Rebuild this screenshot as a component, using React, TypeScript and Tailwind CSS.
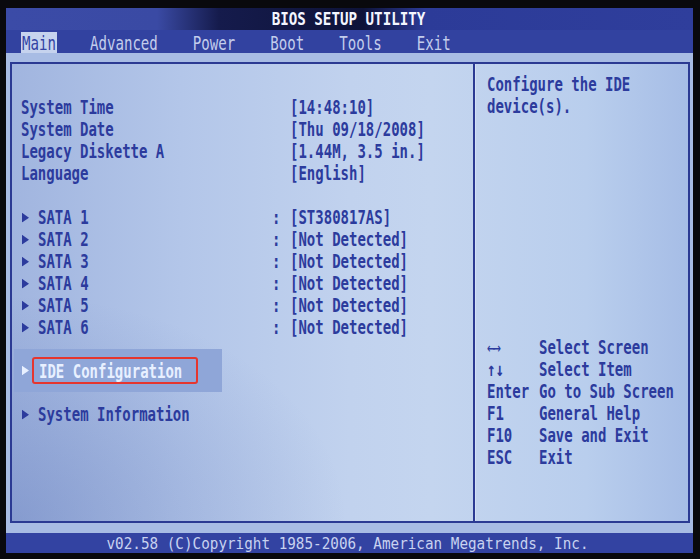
import React from 'react';

type InfoRow = { label: string; value: string; sub?: boolean };

const topRows: InfoRow[] = [
  { label: 'System Time', value: '[14:48:10]' },
  { label: 'System Date', value: '[Thu 09/18/2008]' },
  { label: 'Legacy Diskette A', value: '[1.44M, 3.5 in.]' },
  { label: 'Language', value: '[English]' },
];

const sataRows: InfoRow[] = [
  { label: 'SATA 1', value: '[ST380817AS]', sub: true },
  { label: 'SATA 2', value: '[Not Detected]', sub: true },
  { label: 'SATA 3', value: '[Not Detected]', sub: true },
  { label: 'SATA 4', value: '[Not Detected]', sub: true },
  { label: 'SATA 5', value: '[Not Detected]', sub: true },
  { label: 'SATA 6', value: '[Not Detected]', sub: true },
];

const keys = [
  { k: '←→', d: 'Select Screen' },
  { k: '↑↓', d: 'Select Item' },
  { k: 'Enter', d: 'Go to Sub Screen' },
  { k: 'F1', d: 'General Help' },
  { k: 'F10', d: 'Save and Exit' },
  { k: 'ESC', d: 'Exit' },
];

const menus = ['Advanced', 'Power', 'Boot', 'Tools', 'Exit'];

// small right-pointing marker used in front of sub menus
const Tri = () => (
  <svg width="7" height="7" viewBox="0 0 7 7">
    <polygon points="0,0 7,3.5 0,7" fill="currentColor" />
  </svg>
);

const Row: React.FC<{ row: InfoRow }> = ({ row }) => (
  <div className="h-[22px] flex items-center scale-y-[1.38] whitespace-pre">
    {row.sub ? (
      <>
        <span className="w-[17px] flex items-center pl-px">
          <Tri />
        </span>
        <span className="w-[234px]">{row.label}</span>
        <span className="w-[18px]">:</span>
      </>
    ) : (
      <span className="w-[269px]">{row.label}</span>
    )}
    <span>{row.value}</span>
  </div>
);

export default function App() {
  return (
    <div className="w-[700px] h-[559px] bg-[#09090d] pt-[8px] pl-[6px] pr-[7px] pb-[6px] overflow-hidden font-['DejaVu_Sans_Mono','Liberation_Mono',monospace] text-[14px] leading-[22px]">
      <div className="flex flex-col h-full">
        {/* title bar */}
        <div className="h-[22px] shrink-0 flex items-center justify-center bg-[linear-gradient(90deg,#3b4ba7_0%,#3a4aa4_22%,#151b4c_31%,#0e1339_52%,#2c3b98_61%,#2f3e9c_100%)]">
          <span className="inline-block scale-y-[1.27] font-bold text-[14.2px] text-[#f4f6ff] pr-[2px]">BIOS SETUP UTILITY</span>
        </div>

        {/* menu bar */}
        <div className="h-[23px] shrink-0 bg-[#3242a0] flex items-end pl-[15px] gap-[35px] text-[14.1px] text-[#c3cdec]">
          <div className="h-[21px] bg-[#c6d3ee] text-[#3343a3] px-px -mr-[2px] flex items-center">
            <span className="inline-block scale-y-[1.4]">Main</span>
          </div>
          {menus.map(m => (
            <div key={m} className="h-[21px] flex items-center">
              <span className="inline-block scale-y-[1.4]">{m}</span>
            </div>
          ))}
        </div>

        {/* body */}
        <div className="flex-1 bg-[#a8bce4] pt-[9px] pl-[4px] pr-[3px] pb-[10px]">
          <div className="h-full border-2 border-[#2b3a93] flex font-bold text-[#2c3b9d] bg-[radial-gradient(ellipse_at_0%_100%,rgba(70,95,170,0.3),transparent_35%),linear-gradient(90deg,#a1b5df_0%,#b3c6e9_25%,#c1d2ee_50%,#c4d5ef_62%,#b9ceed_85%,#a6bde6_100%)]">
            {/* left column */}
            <div className="w-[461px] shrink-0 pt-[32px] pl-[9px]">
              {topRows.map(r => (
                <Row key={r.label} row={r} />
              ))}
              <div className="h-[22px]" />
              {sataRows.map(r => (
                <Row key={r.label} row={r} />
              ))}

              <div className="mt-[11px] mb-[11px] -ml-[7px] w-[208px] h-[43px] bg-[#8fa6d8] flex items-center pl-[8px] text-[#e8f0ff]">
                <span className="w-[10px] flex items-center scale-y-[1.38]">
                  <Tri />
                </span>
                <div className="w-[166px] h-[27px] border-2 border-[#e6362f] rounded-[3px] flex items-center pl-[5px]">
                  <span className="inline-block scale-y-[1.38] whitespace-pre">IDE Configuration</span>
                </div>
              </div>

              <div className="h-[22px] flex items-center scale-y-[1.38] whitespace-pre">
                <span className="w-[17px] flex items-center pl-px">
                  <Tri />
                </span>
                <span>System Information</span>
              </div>
            </div>

            {/* right column */}
            <div className="flex-1 border-l-2 border-[#2b3a93] pt-[9px] pl-[12px] shadow-[inset_1px_0_0_#d4e0f5]">
              <div className="h-[22px] flex items-center scale-y-[1.38] whitespace-pre">Configure the IDE</div>
              <div className="h-[22px] flex items-center scale-y-[1.38] whitespace-pre">device(s).</div>

              <div className="mt-[219px]">
                {keys.map(k => (
                  <div key={k.k} className="h-[22px] flex items-center scale-y-[1.38] whitespace-pre">
                    <span className={k.k === '←→' ? 'w-[52px] tracking-[-3px] font-normal' : 'w-[52px]'}>{k.k}</span>
                    <span>{k.d}</span>
                  </div>
                ))}
              </div>
            </div>
          </div>
        </div>

        {/* footer */}
        <div className="h-[20px] shrink-0 bg-[#3343a2] flex items-center justify-center text-[14.3px] text-[#c8d2f0]">
          <span className="inline-block scale-y-[1.15] whitespace-pre pr-[4px]">v02.58 (C)Copyright 1985-2006, American Megatrends, Inc.</span>
        </div>
      </div>
    </div>
  );
}
